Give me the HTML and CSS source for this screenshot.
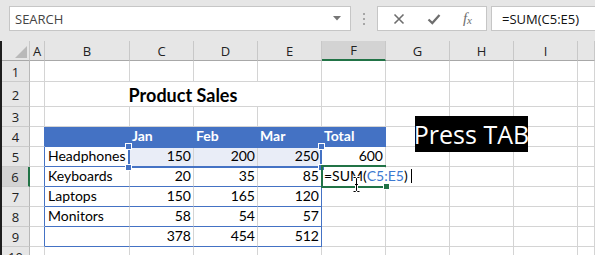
FILE: index.html
```html
<!DOCTYPE html>
<html lang="en">
<head>
    <meta charset="UTF-8">
    <title>Product Sales</title>
    <link rel="stylesheet" href="styles.css">
</head>
<body>
    <div class="toolbar">
        <div class="namebox">
            <span>SEARCH</span>
            <svg class="drop" width="8" height="5" viewBox="0 0 8 5"><path d="M0 0h8L4 4.5z" fill="#767676"/></svg>
        </div>
        <div class="grip"><i></i><i></i><i></i></div>
        <div class="fbtns">
            <svg width="12" height="12" viewBox="0 0 12 12"><path d="M1.5 1.5l9 9M10.5 1.5l-9 9" stroke="#6e6e6e" stroke-width="1.6" fill="none"/></svg>
            <svg width="14" height="12" viewBox="0 0 14 12"><path d="M1.5 6.5l3.8 3.6L12.5 2" stroke="#6e6e6e" stroke-width="2.2" fill="none"/></svg>
            <span class="fx">f<sub>x</sub></span>
        </div>
        <div class="finput">=SUM(C5:E5)</div>
    </div>

    <div class="sheet">
        <div class="corner"><svg width="12" height="12" viewBox="0 0 12 12"><path d="M12 0v12H0z" fill="#b9b9b9"/></svg></div>
        <div class="ch">A</div>
        <div class="ch">B</div>
        <div class="ch">C</div>
        <div class="ch">D</div>
        <div class="ch">E</div>
        <div class="ch active">F</div>
        <div class="ch">G</div>
        <div class="ch">H</div>
        <div class="ch">I</div>
        <div class="ch"></div>

        <div class="rh">1</div>
        <div></div><div></div><div></div><div></div><div></div><div></div><div></div><div></div><div></div><div></div>

        <div class="rh">2</div>
        <div></div>
        <div class="cell title">Product Sales</div>
        <div></div><div></div><div></div><div></div><div></div>

        <div class="rh">3</div>
        <div></div><div></div><div></div><div></div><div></div><div></div><div></div><div></div><div></div><div></div>

        <div class="rh">4</div>
        <div class="tl"></div>
        <div class="cell th"></div>
        <div class="cell th">Jan</div>
        <div class="cell th">Feb</div>
        <div class="cell th">Mar</div>
        <div class="cell th">Total</div>
        <div></div><div></div><div></div><div></div>

        <div class="rh">5</div>
        <div class="tl"></div>
        <div class="cell tb">Headphones</div>
        <div class="cell tb n hl">150</div>
        <div class="cell tb n hl">200</div>
        <div class="cell tb tr n hl">250</div>
        <div class="cell n">600</div>
        <div></div><div></div><div></div><div></div>

        <div class="rh active">6</div>
        <div class="tl"></div>
        <div class="cell tb">Keyboards</div>
        <div class="cell tb n">20</div>
        <div class="cell tb n">35</div>
        <div class="cell tb tr n">85</div>
        <div class="cell edit"><span class="typed">=SUM(<span class="ref">C5:E5</span>)<i class="caret"></i></span></div>
        <div></div><div></div><div></div><div></div>

        <div class="rh">7</div>
        <div class="tl"></div>
        <div class="cell tb">Laptops</div>
        <div class="cell tb n">150</div>
        <div class="cell tb n">165</div>
        <div class="cell tb tr n">120</div>
        <div></div><div></div><div></div><div></div><div></div>

        <div class="rh">8</div>
        <div class="tl"></div>
        <div class="cell tb">Monitors</div>
        <div class="cell tb n">58</div>
        <div class="cell tb n">54</div>
        <div class="cell tb tr n">57</div>
        <div></div><div></div><div></div><div></div><div></div>

        <div class="rh">9</div>
        <div class="tl"></div>
        <div class="cell tb"></div>
        <div class="cell tb n">378</div>
        <div class="cell tb n">454</div>
        <div class="cell tb tr n">512</div>
        <div></div><div></div><div></div><div></div><div></div>

        <div class="rh">10</div>
        <div></div><div></div><div></div><div></div><div></div><div></div><div></div><div></div><div></div><div></div>

        <div class="refbox"><span class="h1"></span><span class="h2"></span><span class="h3"></span><span class="h4"></span></div>
        <div class="activebox"><span class="handle"></span></div>

        <div class="hint">Press TAB</div>
        <svg class="ibeam" width="9" height="17" viewBox="0 0 9 17">
            <path d="M1.5 1.5h2l1 1 1-1h2M4.5 2.5v12M1.5 15.5h2l1-1 1 1h2M3 8.5h3" stroke="#fff" stroke-width="3" fill="none"/>
            <path d="M1.5 1.5h2l1 1 1-1h2M4.5 2.5v12M1.5 15.5h2l1-1 1 1h2M3 8.5h3" stroke="#000" stroke-width="1" fill="none"/>
        </svg>
    </div>
</body>
</html>
```

FILE: styles.css
```css
body {
    margin: 0;
    height: 255px;
    overflow: hidden;
    background-color: #e6e6e6;
    font-family: "Open Sans", "Noto Sans", sans-serif;
}

.toolbar {
    display: flex;
    align-items: flex-start;
    height: 41px;
    padding-top: 6px;
    box-sizing: border-box;
    overflow: hidden;
}

.namebox,
.fbtns,
.finput {
    height: 25px;
    box-sizing: border-box;
    background-color: #fff;
    border: 1px solid #c6c6c6;
    display: flex;
    align-items: center;
}

.namebox {
    width: 342px;
    flex: none;
    margin-left: 9px;
    padding: 0 9px 0 5px;
    justify-content: space-between;
    font-size: 13px;
    color: #444;
}

.grip {
    width: 26px;
    flex: none;
    height: 25px;
    display: flex;
    flex-direction: column;
    align-items: center;
    justify-content: center;
    gap: 3px;
}

.grip i {
    width: 2px;
    height: 2px;
    background-color: #a6a6a6;
}

.fbtns {
    width: 110px;
    flex: none;
    padding: 0 14px 0 15px;
    justify-content: space-between;
}

.fx {
    font-family: "Liberation Serif", serif;
    font-style: italic;
    font-size: 15px;
    color: #6e6e6e;
    line-height: 1;
}

.fx sub {
    font-size: 11px;
    vertical-align: -1px;
}

.finput {
    flex: none;
    width: 120px;
    margin-left: 4px;
    padding-left: 10px;
    font-size: 13px;
    color: #111;
}

.sheet {
    position: relative;
    display: grid;
    grid-template-columns: 28px 15px 85px repeat(7, 64px) 1fr;
    grid-template-rows: 20px 21px 25px repeat(8, 20px);
    background-color: #fff;
    border-left: 2px solid #1e1e1e;
}

.sheet > div {
    box-sizing: border-box;
    border-right: 1px solid #d4d4d4;
    border-bottom: 1px solid #d4d4d4;
}

.corner,
.ch,
.rh {
    background-color: #e6e6e6;
    font-size: 13px;
    color: #222;
    display: flex;
    align-items: center;
    justify-content: center;
}

.corner {
    align-items: flex-end;
    justify-content: flex-end;
    padding: 0 2px 2px 0;
}

.sheet > .corner,
.sheet > .ch {
    border-right-color: #c8c8c8;
    border-bottom-color: #a8a8a8;
}

.sheet > .rh {
    border-right-color: #b8b8b8;
    border-bottom-color: #cbcbcb;
    padding-top: 1px;
}

.sheet > .ch.active {
    background-color: #d3d3d3;
    border-bottom: 2px solid #217346;
}

.sheet > .rh.active {
    background-color: #d3d3d3;
    border-right: 2px solid #217346;
}

.cell {
    display: flex;
    align-items: flex-end;
    padding: 0 3px 2px;
    font-family: Lato, "Open Sans", sans-serif;
    font-size: 14px;
    line-height: 16px;
    color: #000;
    white-space: nowrap;
}

.title {
    grid-column: span 4;
    justify-content: center;
    font-weight: bold;
    font-size: 18px;
    padding-bottom: 3px;
}

.n {
    justify-content: flex-end;
    padding-right: 2px;
}

.sheet > .tl {
    border-right-color: #4472c4;
}

.sheet > .th {
    background-color: #4472c4;
    border-color: #4472c4;
    color: #fff;
    font-weight: bold;
    padding-left: 2px;
}

.sheet > .tb {
    border-bottom-color: #4472c4;
}

.sheet > .tr {
    border-right-color: #4472c4;
}

.hl {
    background-color: #e9edf7;
}

.edit {
    overflow: visible;
    padding-left: 2px;
    position: relative;
    z-index: 2;
}

.typed {
    background-color: #fff;
    padding-right: 3px;
    display: flex;
    align-items: flex-end;
}

.ref {
    color: #3c78d0;
}

.caret {
    display: inline-block;
    width: 1px;
    height: 14px;
    margin: 0 0 1px 3px;
    background-color: #000;
}

/* overlays sit in grid areas but stay out of auto-placement */
.sheet > .refbox {
    position: absolute;
    grid-column: 4 / 7;
    grid-row: 6 / 7;
    top: -1px;
    bottom: -1px;
    left: -2px;
    right: 0;
    border: 2px solid #4472c4;
    z-index: 1;
}

.refbox span {
    position: absolute;
    width: 5px;
    height: 5px;
    background-color: #4472c4;
    border: 1px solid #fff;
}

.refbox .h1 { left: -5px; top: -5px; }
.refbox .h2 { right: -5px; top: -5px; }
.refbox .h3 { left: -5px; bottom: -5px; }
.refbox .h4 { right: -5px; bottom: -5px; }

.sheet > .activebox {
    position: absolute;
    grid-column: 7 / 8;
    grid-row: 7 / 8;
    top: -2px;
    bottom: -1px;
    left: -1px;
    right: 0;
    border: 2px solid #217346;
    border-right: none;
    z-index: 3;
}

.handle {
    position: absolute;
    right: -4px;
    bottom: -4px;
    width: 5px;
    height: 5px;
    background-color: #217346;
    border: 1px solid #fff;
}

.sheet > .hint {
    position: absolute;
    left: 413px;
    top: 75px;
    width: 113px;
    height: 36px;
    border: none;
    background-color: #000;
    color: #fff;
    font-size: 25px;
    white-space: nowrap;
    display: flex;
    align-items: center;
    justify-content: center;
}

.ibeam {
    position: absolute;
    left: 350px;
    top: 135px;
    z-index: 4;
}
```
